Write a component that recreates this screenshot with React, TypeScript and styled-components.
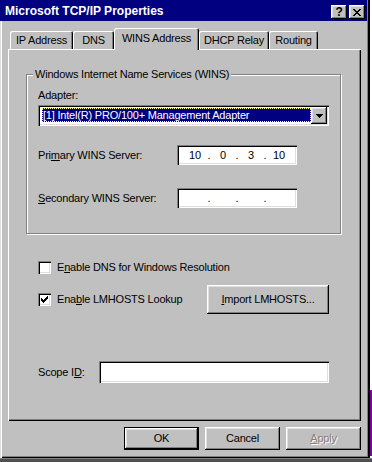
import React from 'react'
import styled, { createGlobalStyle } from 'styled-components'

const GlobalStyle = createGlobalStyle`
  html, body {
    margin: 0;
    padding: 0;
    background: #404040;
  }
  body {
    font-family: "Liberation Sans", Arial, sans-serif;
    font-size: 11px;
    letter-spacing: -0.2px;
    color: #000;
  }
`

const raised = `
  box-shadow: inset -1px -1px #000, inset 1px 1px #fff, inset -2px -2px #808080, inset 2px 2px #dfdfdf;
`

const sunken = `
  box-shadow: inset 1px 1px #808080, inset 2px 2px #000, inset -1px -1px #fff, inset -2px -2px #dfdfdf;
`

const Screen = styled.div`
  width: 372px;
  height: 462px;
  overflow: hidden;
  display: grid;
  grid-template-columns: 369px 3px;
  grid-template-rows: 458px 4px;
  background: #505050;
`

const RightStrip = styled.div`
  display: flex;
  flex-direction: column;
  background: #fff;
  border-left: 1px solid #000;
`

const PurpleBand = styled.div`
  margin-top: auto;
  height: 66px;
  margin-bottom: 2px;
  background: #8000a0;
`

const BottomStrip = styled.div`
  grid-column: 1 / 3;
  border-top: 1px solid #808080;
  background: #505050;
`

const Window = styled.div`
  display: flex;
  flex-direction: column;
  background: #c0c0c0;
  box-shadow: inset 1px 0 #dfdfdf, inset 2px 0 #fff, inset -1px -1px #000, inset -2px -2px #808080;
`

const TitleBar = styled.div`
  height: 21px;
  margin-right: 2px;
  box-sizing: border-box;
  background: #000080;
  display: flex;
  align-items: flex-start;
  padding: 0 2px 0 5px;
`

const Title = styled.div`
  margin-top: 4px;
  line-height: 15px;
  font-size: 12px;
  letter-spacing: 0;
  font-weight: bold;
  color: #fff;
  flex: 1;
`

const TitleButton = styled.div`
  width: 16px;
  height: 14px;
  margin-top: 5px;
  margin-left: 2px;
  box-sizing: border-box;
  background: #c0c0c0;
  ${raised}
  display: flex;
  align-items: center;
  justify-content: center;
  font-weight: bold;
  font-size: 12px;
  line-height: 12px;
`

const Body = styled.div`
  display: flex;
  flex-direction: column;
  padding-left: 8px;
`

const TabRow = styled.div`
  height: 28px;
  display: flex;
  align-items: flex-end;
  padding-left: 2px;
`

const Tab = styled.div<{ $w: number; $active?: boolean }>`
  width: ${({ $w }) => $w}px;
  height: ${({ $active }) => ($active ? 22 : 18)}px;
  margin-bottom: ${({ $active }) => ($active ? -1 : 0)}px;
  padding-bottom: ${({ $active }) => ($active ? 2 : 0)}px;
  position: relative;
  z-index: ${({ $active }) => ($active ? 2 : 0)};
  box-sizing: border-box;
  background: #c0c0c0;
  border-radius: 2px 2px 0 0;
  box-shadow: inset 1px 1px #fff, inset -1px 0 #000, inset -2px 0 #808080;
  display: flex;
  align-items: center;
  justify-content: center;
  line-height: 13px;
  white-space: nowrap;
`

const Panel = styled.div`
  width: 353px;
  height: 372px;
  box-sizing: border-box;
  position: relative;
  z-index: 1;
  box-shadow: inset 1px 1px #fff, inset -1px -1px #000, inset -2px -2px #808080;
  padding: 25px 0 0 18px;
  display: flex;
  flex-direction: column;
`

const GroupBox = styled.div`
  position: relative;
  width: 315px;
  height: 160px;
  box-sizing: border-box;
  border: 1px solid #808080;
  box-shadow: inset 1px 1px #fff, 1px 1px #fff;
  padding: 14px 0 0 11px;
  display: flex;
  flex-direction: column;
`

const Legend = styled.div`
  position: absolute;
  top: -7px;
  left: 6px;
  padding: 0 2px;
  line-height: 13px;
  background: #c0c0c0;
  white-space: nowrap;
`

const Label = styled.div<{ $w?: number }>`
  line-height: 13px;
  white-space: nowrap;
  width: ${({ $w }) => ($w ? `${$w}px` : 'auto')};
  flex-shrink: 0;
`

const Accel = styled.span`
  text-decoration: underline;
  text-underline-offset: 1px;
`

const Combo = styled.div`
  margin-top: 3px;
  width: 291px;
  height: 21px;
  box-sizing: border-box;
  padding: 2px;
  background: #fff;
  ${sunken}
  display: flex;
`

const ComboValue = styled.div`
  flex: 1;
  margin: 1px 0 2px 2px;
  padding-left: 1px;
  background: #000080;
  color: #fff;
  line-height: 14px;
  outline: 1px dotted #ffff80;
  outline-offset: -1px;
  white-space: nowrap;
  overflow: hidden;
`

const ComboArrow = styled.div`
  width: 16px;
  height: 17px;
  box-sizing: border-box;
  background: #c0c0c0;
  ${raised}
  display: flex;
  align-items: center;
  justify-content: center;
`

const FieldRow = styled.div<{ $mt: number; $h: number }>`
  margin-top: ${({ $mt }) => $mt}px;
  height: ${({ $h }) => $h}px;
  display: flex;
  align-items: center;
`

const IpField = styled.div`
  width: 120px;
  height: 20px;
  box-sizing: border-box;
  padding: 2px 2px 2px 6px;
  background: #fff;
  ${sunken}
  display: grid;
  grid-template-columns: 24px 4px 24px 4px 24px 4px 24px;
  align-items: center;
  line-height: 13px;
`

const Octet = styled.span`
  text-align: center;
`

const Dot = styled.span`
  text-align: center;
`

const Check = styled.div`
  width: 13px;
  height: 13px;
  box-sizing: border-box;
  background: #fff;
  ${sunken}
  display: flex;
  align-items: center;
  justify-content: center;
  flex-shrink: 0;
`

const CheckGroup = styled.div<{ $w?: number }>`
  display: flex;
  align-items: center;
  gap: 6px;
  margin-left: 12px;
  width: ${({ $w }) => ($w ? `${$w}px` : 'auto')};
`

const Button = styled.div<{ $w: number; $h: number; $default?: boolean; $disabled?: boolean }>`
  width: ${({ $w }) => $w}px;
  height: ${({ $h }) => $h}px;
  box-sizing: border-box;
  background: #c0c0c0;
  border: ${({ $default }) => ($default ? '1px solid #000' : 'none')};
  ${raised}
  display: flex;
  align-items: center;
  justify-content: center;
  line-height: 13px;
  white-space: nowrap;
  color: ${({ $disabled }) => ($disabled ? '#808080' : '#000')};
  text-shadow: ${({ $disabled }) => ($disabled ? '1px 1px 0 #fff' : 'none')};
`

const TextInput = styled.div<{ $w: number; $h: number }>`
  width: ${({ $w }) => $w}px;
  height: ${({ $h }) => $h}px;
  box-sizing: border-box;
  background: #fff;
  ${sunken}
`

const ScopeLabel = styled(Label)`
  margin-left: 12px;
`

const ButtonRow = styled.div`
  width: 353px;
  margin-top: 6px;
  display: flex;
  justify-content: flex-end;
  gap: 6px;
`

const IpAddress = ({ octets }: { octets: string[] }) => (
  <IpField>
    {octets.map((o, i) => (
      <React.Fragment key={i}>
        {i > 0 && <Dot>.</Dot>}
        <Octet>{o}</Octet>
      </React.Fragment>
    ))}
  </IpField>
)

const CheckBox = ({ checked }: { checked?: boolean }) => (
  <Check>
    {checked && (
      <svg width="7" height="7" viewBox="0 0 7 7" shapeRendering="crispEdges">
        <path d="M0 2h1v1h1v1h1v-1h1v-1h1v-1h1v-1h1v3h-1v1h-1v1h-1v1h-1v1h-1v-1h-1v-1h-1z" fill="#000" />
      </svg>
    )}
  </Check>
)

export default function App() {
  return (
    <>
      <GlobalStyle />
      <Screen>
        <Window>
          <TitleBar>
            <Title>Microsoft TCP/IP Properties</Title>
            <TitleButton>?</TitleButton>
            <TitleButton>
              <svg width="8" height="7" viewBox="0 0 8 7" shapeRendering="crispEdges">
                <path d="M0 0h2v1h1v1h2v-1h1v-1h2v1h-1v1h-1v1h-1v1h1v1h1v1h1v1h-2v-1h-1v-1h-2v1h-1v1h-2v-1h1v-1h1v-1h1v-1h-1v-1h-1v-1h-1z" fill="#000" />
              </svg>
            </TitleButton>
          </TitleBar>

          <Body>
            <TabRow>
              <Tab $w={63}>IP Address</Tab>
              <Tab $w={41}>DNS</Tab>
              <Tab $w={85} $active>WINS Address</Tab>
              <Tab $w={70}>DHCP Relay</Tab>
              <Tab $w={49}>Routing</Tab>
            </TabRow>

            <Panel>
              <GroupBox>
                <Legend>Windows Internet Name Services (WINS)</Legend>
                <Label>Adapter:</Label>
                <Combo>
                  <ComboValue>[1] Intel(R) PRO/100+ Management Adapter</ComboValue>
                  <ComboArrow>
                    <svg width="7" height="4" viewBox="0 0 7 4" shapeRendering="crispEdges">
                      <path d="M0 0h7v1h-1v1h-1v1h-1v1h-1v-1h-1v-1h-1v-1h-1z" fill="#000" />
                    </svg>
                  </ComboArrow>
                </Combo>
                <FieldRow $mt={19} $h={20}>
                  <Label $w={139}>
                    Pri<Accel>m</Accel>ary WINS Server:
                  </Label>
                  <IpAddress octets={['10', '0', '3', '10']} />
                </FieldRow>
                <FieldRow $mt={23} $h={20}>
                  <Label $w={139}>
                    <Accel>S</Accel>econdary WINS Server:
                  </Label>
                  <IpAddress octets={['', '', '', '']} />
                </FieldRow>
              </GroupBox>

              <FieldRow $mt={27} $h={13}>
                <CheckGroup>
                  <CheckBox />
                  <Label>
                    E<Accel>n</Accel>able DNS for Windows Resolution
                  </Label>
                </CheckGroup>
              </FieldRow>

              <FieldRow $mt={11} $h={29}>
                <CheckGroup $w={169}>
                  <CheckBox checked />
                  <Label>
                    Ena<Accel>b</Accel>le LMHOSTS Lookup
                  </Label>
                </CheckGroup>
                <Button $w={122} $h={29}>
                  <span>
                    <Accel>I</Accel>mport LMHOSTS...
                  </span>
                </Button>
              </FieldRow>

              <FieldRow $mt={47} $h={22}>
                <ScopeLabel $w={61}>
                  Scope I<Accel>D</Accel>:
                </ScopeLabel>
                <TextInput $w={230} $h={22} />
              </FieldRow>
            </Panel>

            <ButtonRow>
              <Button $w={75} $h={23} $default>
                OK
              </Button>
              <Button $w={75} $h={23}>
                Cancel
              </Button>
              <Button $w={75} $h={23} $disabled>
                <span>
                  <Accel>A</Accel>pply
                </span>
              </Button>
            </ButtonRow>
          </Body>
        </Window>
        <RightStrip>
          <PurpleBand />
        </RightStrip>
        <BottomStrip />
      </Screen>
    </>
  )
}
